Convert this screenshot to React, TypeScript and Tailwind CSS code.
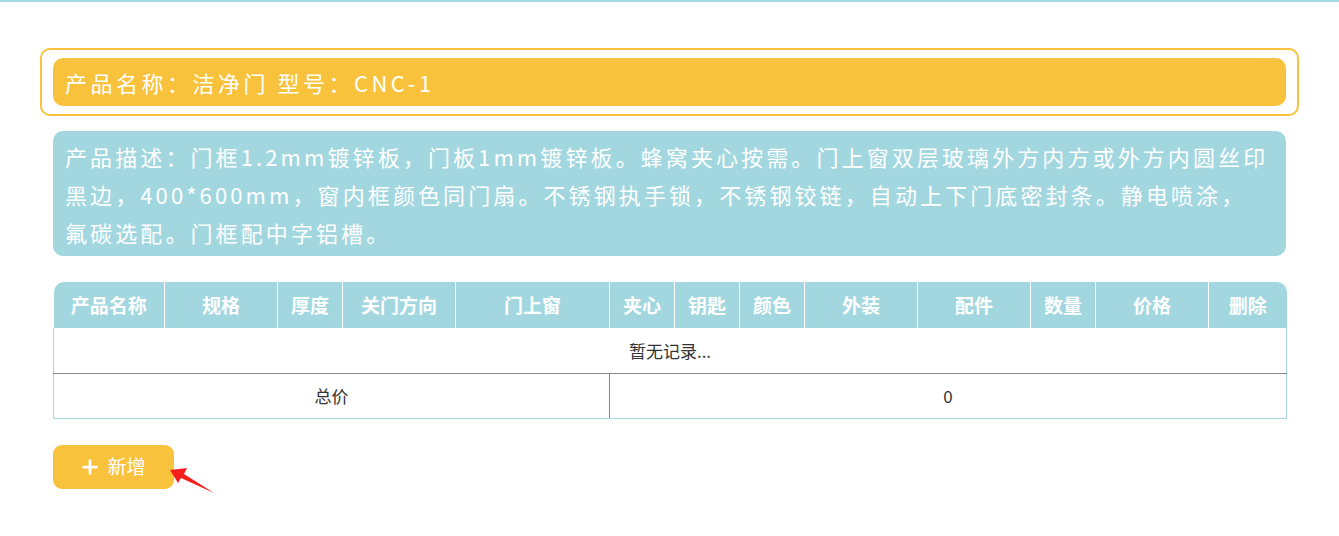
import { Plus } from 'lucide-react';

const cols = [
  { name: '产品名称', w: 'w-[111px]' },
  { name: '规格', w: 'w-[113px]' },
  { name: '厚度', w: 'w-[65px]' },
  { name: '关门方向', w: 'w-[113px]' },
  { name: '门上窗', w: 'w-[154px]' },
  { name: '夹心', w: 'w-[65px]' },
  { name: '钥匙', w: 'w-[65px]' },
  { name: '颜色', w: 'w-[65px]' },
  { name: '外装', w: 'w-[113px]' },
  { name: '配件', w: 'w-[113px]' },
  { name: '数量', w: 'w-[65px]' },
  { name: '价格', w: 'w-[113px]' },
  { name: '删除', w: 'w-[78px]' },
];

const descLines = [
  '产品描述：门框1.2mm镀锌板，门板1mm镀锌板。蜂窝夹心按需。门上窗双层玻璃外方内方或外方内圆丝印',
  '黑边，400*600mm，窗内框颜色同门扇。不锈钢执手锁，不锈钢铰链，自动上下门底密封条。静电喷涂，',
  '氟碳选配。门框配中字铝槽。',
];

export default function App() {
  return (
    <div
      className="min-h-[536px] bg-white border-t-2 border-[#a6dbe2]"
      style={{ fontFamily: '"Noto Sans CJK SC", "Noto Sans", sans-serif' }}
    >
      <div className="px-[40px] pt-[46px]">
        {/* 产品名称 */}
        <div className="w-[1259px] border-2 border-[#f9c23c] rounded-[10px] px-[11px] py-[8px]">
          <div className="h-[48px] bg-[#f9c23c] rounded-[10px] flex items-center pl-[12px] text-white text-[22px] tracking-[3.5px]">
            产品名称：洁净门 型号：CNC-1
          </div>
        </div>

        <div className="pl-[13px] w-[1246px]">
          {/* 产品描述 */}
          <div className="mt-[15px] bg-[#a2d7df] rounded-[10px] pl-[12px] pt-[6px] pb-[5px] text-white text-[22px] leading-[38px] tracking-[3.1px] overflow-hidden">
            {descLines.map((l) => (
              <div key={l} className="whitespace-nowrap">
                {l}
              </div>
            ))}
          </div>

          {/* 表格 */}
          <table className="mt-[26px] w-[1233px] table-fixed border-collapse">
            <thead>
              <tr className="h-[46px] bg-[#a2d7df]">
                {cols.map((c, i) => (
                  <th
                    key={c.name}
                    className={`${c.w} text-white text-[19px] font-bold text-center p-0 ${
                      i < cols.length - 1 ? 'border-r border-white' : ''
                    } ${i === 0 ? 'rounded-tl-[10px]' : ''} ${i === cols.length - 1 ? 'rounded-tr-[10px]' : ''}`}
                  >
                    {c.name}
                  </th>
                ))}
              </tr>
            </thead>
            <tbody>
              <tr className="h-[45px]">
                <td
                  colSpan={13}
                  className="text-center text-[17px] text-[#333] border-l border-r border-b border-l-[#a2d7df] border-r-[#a2d7df] border-b-[#888888]"
                >
                  暂无记录...
                </td>
              </tr>
              <tr className="h-[45px]">
                <td
                  colSpan={5}
                  className="text-center text-[17px] text-[#333] border-l border-b border-r border-l-[#a2d7df] border-b-[#a2d7df] border-r-[#888888]"
                >
                  总价
                </td>
                <td
                  colSpan={8}
                  className="text-center text-[17px] text-[#333] border-r border-b border-r-[#a2d7df] border-b-[#a2d7df]"
                >
                  0
                </td>
              </tr>
            </tbody>
          </table>

          {/* 新增 */}
          <div className="relative mt-[26px] w-[200px] h-[50px]">
            <button className="w-[121px] h-[44px] bg-[#f9c23c] rounded-[9px] flex items-center justify-center gap-[6px] pr-[2px] text-white text-[19px]">
              <Plus className="w-[22px] h-[22px]" strokeWidth={3} />
              新增
            </button>
            <svg
              className="absolute left-[114px] top-[20px]"
              width="50"
              height="32"
              viewBox="0 0 50 32"
            >
              <polygon points="3,5 20,3 17,9 47,28 14,13 11,18" fill="#f5201a" />
            </svg>
          </div>
        </div>
      </div>
    </div>
  );
}
